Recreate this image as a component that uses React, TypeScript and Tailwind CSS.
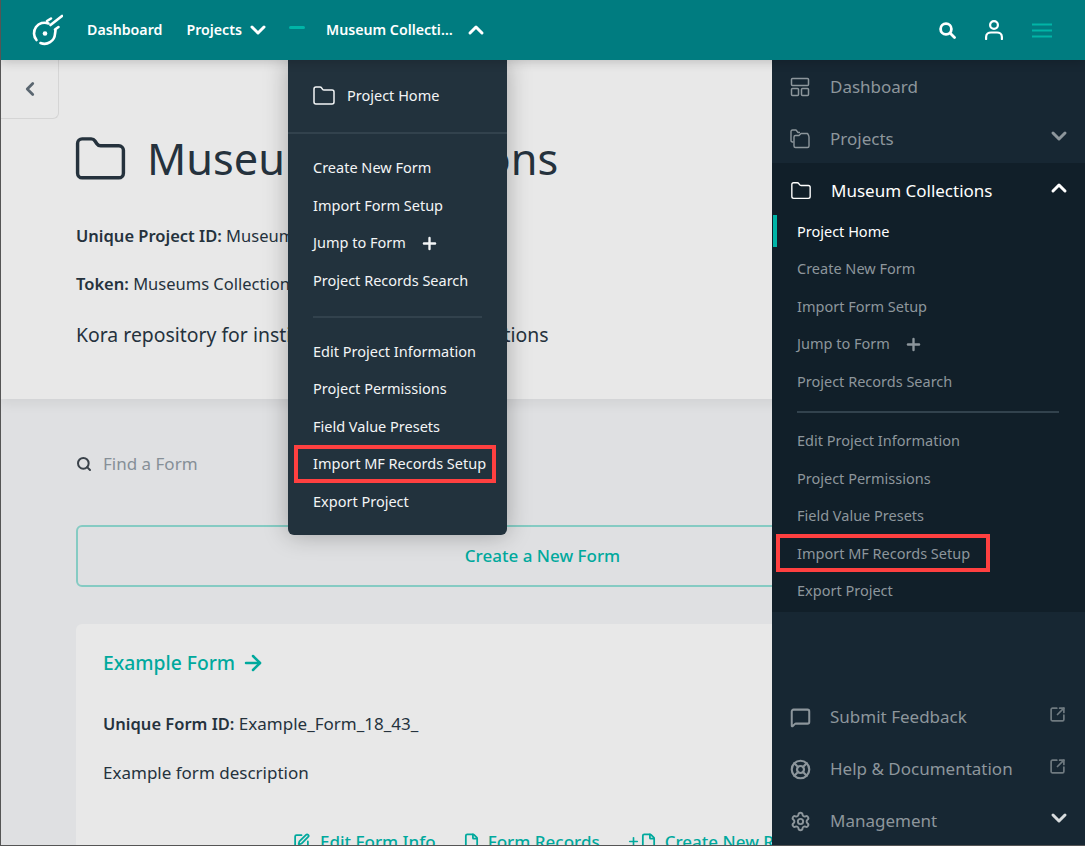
import { ArrowRight, ChevronDown, ChevronLeft, ChevronUp, File, Folder, LifeBuoy, MessageSquare, Plus, Search, Settings, SquareArrowOutUpRight, SquarePen } from "lucide-react";

const ubuntu = { fontFamily: '"Noto Sans", "Open Sans", sans-serif' };

function Logo() {
  return (
    <svg width="32" height="32" viewBox="0 0 32 32" fill="none" stroke="white" strokeWidth="2.6" strokeLinecap="round">
      <path d="M17.5 9.5 A10.5 10.5 0 0 0 5.5 26" />
      <path d="M9.5 29 A10.5 10.5 0 0 0 24 20 L24.5 16.5" />
      <path d="M19.5 11 L31 2" />
      <path d="M16 7 L20 4.5" />
      <path d="M24 15.5 L27.5 13" />
      <circle cx="14" cy="19.5" r="2.3" fill="white" stroke="none" />
    </svg>
  );
}

function DashboardIcon() {
  return (
    <svg width="20" height="20" viewBox="0 0 20 20" fill="none" stroke="currentColor" strokeWidth="1.5">
      <rect x="1.5" y="1.5" width="17" height="7" rx="1" />
      <rect x="1.5" y="11.5" width="7" height="7" rx="1" />
      <rect x="11.5" y="11.5" width="7" height="7" rx="1" />
    </svg>
  );
}

function ProjectsIcon() {
  return (
    <svg width="20" height="20" viewBox="0 0 20 20" fill="none" stroke="currentColor" strokeWidth="1.4" strokeLinejoin="round">
      <path d="M3.5 13 H2.5 C1.5 13 1 12.5 1 11.5 V2.5 C1 1.5 1.5 1 2.5 1 H6 L8 3.5 H10" />
      <path d="M4 8 C4 7 4.5 6.5 5.5 6.5 H9 L11 4.5 H17.5 C18.5 6 19 7 19 8 V17 C19 18 18.5 18.5 17.5 18.5 H5.5 C4.5 18.5 4 18 4 17 Z" />
    </svg>
  );
}

function SearchIcon() {
  return (
    <svg width="17" height="17" viewBox="0 0 17 17" fill="none" stroke="white" strokeWidth="2.8" strokeLinecap="round">
      <circle cx="7" cy="7" r="5.4" />
      <path d="M11.5 11.5 L15.5 15.5" />
    </svg>
  );
}

function UserIcon() {
  return (
    <svg width="18" height="20" viewBox="0 0 18 20" fill="none" stroke="white" strokeWidth="2.2" strokeLinecap="round">
      <circle cx="9" cy="5" r="3.9" />
      <path d="M1.1 19 V17 C1.1 14 3.5 12.5 6 12.5 H12 C14.5 12.5 16.9 14 16.9 17 V19" />
    </svg>
  );
}

function MenuIcon() {
  return (
    <svg width="20" height="15" viewBox="0 0 20 15" fill="none" stroke="#00b5a7" strokeWidth="2">
      <path d="M0 1.5 H20" />
      <path d="M0 7.5 H20" />
      <path d="M0 13.5 H20" />
    </svg>
  );
}

function Row({ label }: { label: string }) {
  return <div className="flex h-[37.5px] items-center text-[14.5px]">{label}</div>;
}

function JumpRow() {
  return (
    <div className="flex h-[37.5px] items-center gap-[14px] text-[14.5px]">
      Jump to Form
      <Plus size={19} strokeWidth={3} />
    </div>
  );
}

function SideLink({ icon, label, right }: { icon: React.ReactNode; label: string; right?: React.ReactNode }) {
  return (
    <div className="flex h-[52px] items-center pl-[18px] pr-[14px] text-[#8d969c]">
      <span className="w-[40px]">{icon}</span>
      <span className="flex-1 text-[17px]">{label}</span>
      {right}
    </div>
  );
}

function FormLink({ icon, label }: { icon: React.ReactNode; label: string }) {
  return (
    <div className="flex items-center gap-[8px] whitespace-nowrap text-[17px] font-medium text-[#00a99d]">
      {icon}
      {label}
    </div>
  );
}

export default function App() {
  return (
    <div className="relative h-[846px] w-[1085px] overflow-hidden border-b border-l border-[#555] bg-[#dfe0e2] text-[#25323d]" style={ubuntu}>
      <header className="relative z-20 flex h-[60px] items-center bg-[#007c80] text-white shadow-[0_2px_10px_rgba(0,0,0,0.18)]">
        <div className="ml-[30px] mr-[24px]"><Logo /></div>
        <span className="text-[14.2px] font-semibold">Dashboard</span>
        <span className="ml-[24px] text-[14.2px] font-semibold">Projects</span>
        <ChevronDown size={24} strokeWidth={3} className="ml-[4px]" />
        <span className="mb-[6px] ml-[19px] h-[3px] w-[16px] rounded-sm bg-[#00b5a7]" />
        <span className="ml-[21px] w-[130px] truncate text-[14.2px] font-semibold">Museum Collections</span>
        <ChevronUp size={24} strokeWidth={3} className="ml-[8px]" />
        <div className="ml-auto mr-[33px] flex items-center gap-[29px]">
          <SearchIcon />
          <UserIcon />
          <MenuIcon />
        </div>
      </header>

      <main>
        <section className="relative h-[339px] bg-[#e8e8e8] pl-[75px] pt-[68px] shadow-[0_4px_12px_rgba(0,0,0,0.07)]">
          <div className="absolute left-0 top-0 flex h-[59px] w-[58px] items-center justify-center rounded-br-md border-b border-r border-[#d5d5d5] text-[#5a6670]">
            <ChevronLeft size={22} strokeWidth={3} />
          </div>
          <div className="flex items-center gap-[19px]">
            <Folder size={55} strokeWidth={1.5} className="-ml-[3px]" />
            <h1 className="whitespace-nowrap text-[43.3px] leading-[62px]">Museum Collections</h1>
          </div>
          <p className="mt-[34px] whitespace-nowrap text-[16.5px]"><b className="font-semibold">Unique Project ID:</b> Museum_Collections_18_</p>
          <p className="mt-[23px] whitespace-nowrap text-[16.5px]"><b className="font-semibold">Token:</b> Museums Collections Token</p>
          <p className="mt-[23px] whitespace-nowrap text-[19.4px]">Kora repository for institutional museum collections</p>
        </section>

        <div className="w-[1008px] pl-[75px]">
          <div className="mt-[53px] flex h-[24px] items-center gap-[11px] text-[17px] text-[#868f97]">
            <Search size={16} strokeWidth={3} className="text-[#3a424a]" />
            Find a Form
          </div>
          <div className="mt-[49px] flex h-[62px] items-center justify-center rounded-md border-2 border-[#85cbc3] text-[17px] font-medium text-[#00a99d]">
            Create a New Form
          </div>
          <div className="mt-[37px] h-[300px] rounded-md bg-[#e8e8e8] pl-[27px] pt-[25px]">
            <div className="flex items-center gap-[6px] text-[19.3px] font-medium text-[#00a99d]">
              Example Form <ArrowRight size={24} strokeWidth={2.5} />
            </div>
            <p className="mt-[33px] text-[17px]"><b className="text-[16.5px] font-semibold">Unique Form ID:</b> Example_Form_18_43_</p>
            <p className="mt-[23px] text-[17px]">Example form description</p>
            <div className="mt-[44px] flex gap-[27px] pl-[190px]">
              <FormLink icon={<SquarePen size={17} strokeWidth={2.5} className="mr-[2px]" />} label="Edit Form Info" />
              <FormLink icon={<File size={17} strokeWidth={2.5} />} label="Form Records" />
              <FormLink icon={<span className="flex items-center"><Plus size={13} strokeWidth={3} /><File size={17} strokeWidth={2.5} /></span>} label="Create New Record" />
            </div>
          </div>
        </div>
      </main>

      {/* project dropdown */}
      <div className="absolute left-[287px] top-[60px] z-10 h-[475px] w-[219px] rounded-b-md bg-[#22323d] text-[#f3f5f6] shadow-[0_0_24px_rgba(0,0,0,0.28)]">
        <div className="flex h-[74px] items-center gap-[11px] border-b-2 border-[#32424d] pl-[24px] text-[14.5px]">
          <Folder size={24} strokeWidth={1.5} />
          Project Home
        </div>
        <div className="pl-[25px] pt-[15.5px]">
          <Row label="Create New Form" />
          <Row label="Import Form Setup" />
          <JumpRow />
          <Row label="Project Records Search" />
        </div>
        <div className="mx-[25px] mb-[15px] mt-[16.5px] h-[2px] bg-[#32424d]" />
        <div className="pl-[25px]">
          <Row label="Edit Project Information" />
          <Row label="Project Permissions" />
          <Row label="Field Value Presets" />
          <div className="relative">
            <Row label="Import MF Records Setup" />
            <span className="absolute left-[-19px] top-[-1px] h-[38px] w-[202px] border-[4.5px] border-[#ff4040]" />
          </div>
          <Row label="Export Project" />
        </div>
      </div>

      {/* sidebar */}
      <aside className="absolute bottom-0 right-0 top-[60px] z-10 flex w-[313px] flex-col bg-[#172733]">
        <div className="-mb-[2px] pt-[1px]">
          <SideLink icon={<DashboardIcon />} label="Dashboard" />
          <SideLink icon={<ProjectsIcon />} label="Projects" right={<ChevronDown size={24} strokeWidth={3} className="mb-[6px]" />} />
        </div>
        <div className="relative h-[449px] bg-[#111f29] text-[#8d969c]">
          <div className="flex h-[50px] items-center pb-[1px] pl-[18px] pr-[14px] pt-[7px] text-white">
            <span className="w-[41px]"><Folder size={22} strokeWidth={1.5} /></span>
            <span className="flex-1 text-[17px]">Museum Collections</span>
            <ChevronUp size={24} strokeWidth={3} className="mb-[6px]" />
          </div>
          <span className="absolute left-[1px] top-[52px] h-[32px] w-[4px] bg-[#00b5a7]" />
          <div className="pl-[25px]">
            <div className="text-white"><Row label="Project Home" /></div>
            <Row label="Create New Form" />
            <Row label="Import Form Setup" />
            <JumpRow />
            <Row label="Project Records Search" />
            <div className="my-[10px] mr-[26px] h-[2px] bg-[#32424d]" />
            <Row label="Edit Project Information" />
            <Row label="Project Permissions" />
            <Row label="Field Value Presets" />
            <div className="relative">
              <Row label="Import MF Records Setup" />
              <span className="absolute left-[-21px] top-[-1px] h-[38px] w-[214px] border-[4.5px] border-[#ff4040]" />
            </div>
            <Row label="Export Project" />
          </div>
        </div>
        <div className="-mb-[2px] mt-auto">
          <SideLink icon={<MessageSquare size={21} strokeWidth={2.3} />} label="Submit Feedback" right={<SquareArrowOutUpRight size={17} strokeWidth={2.4} className="mb-[6px] mr-[5px] text-[#6f7a80]" />} />
          <SideLink icon={<LifeBuoy size={21} strokeWidth={2.5} />} label="Help & Documentation" right={<SquareArrowOutUpRight size={17} strokeWidth={2.4} className="mb-[6px] mr-[5px] text-[#6f7a80]" />} />
          <SideLink icon={<Settings size={21} strokeWidth={2.2} />} label="Management" right={<ChevronDown size={24} strokeWidth={3} className="mb-[6px] text-[#d8dcde]" />} />
        </div>
      </aside>
    </div>
  );
}
